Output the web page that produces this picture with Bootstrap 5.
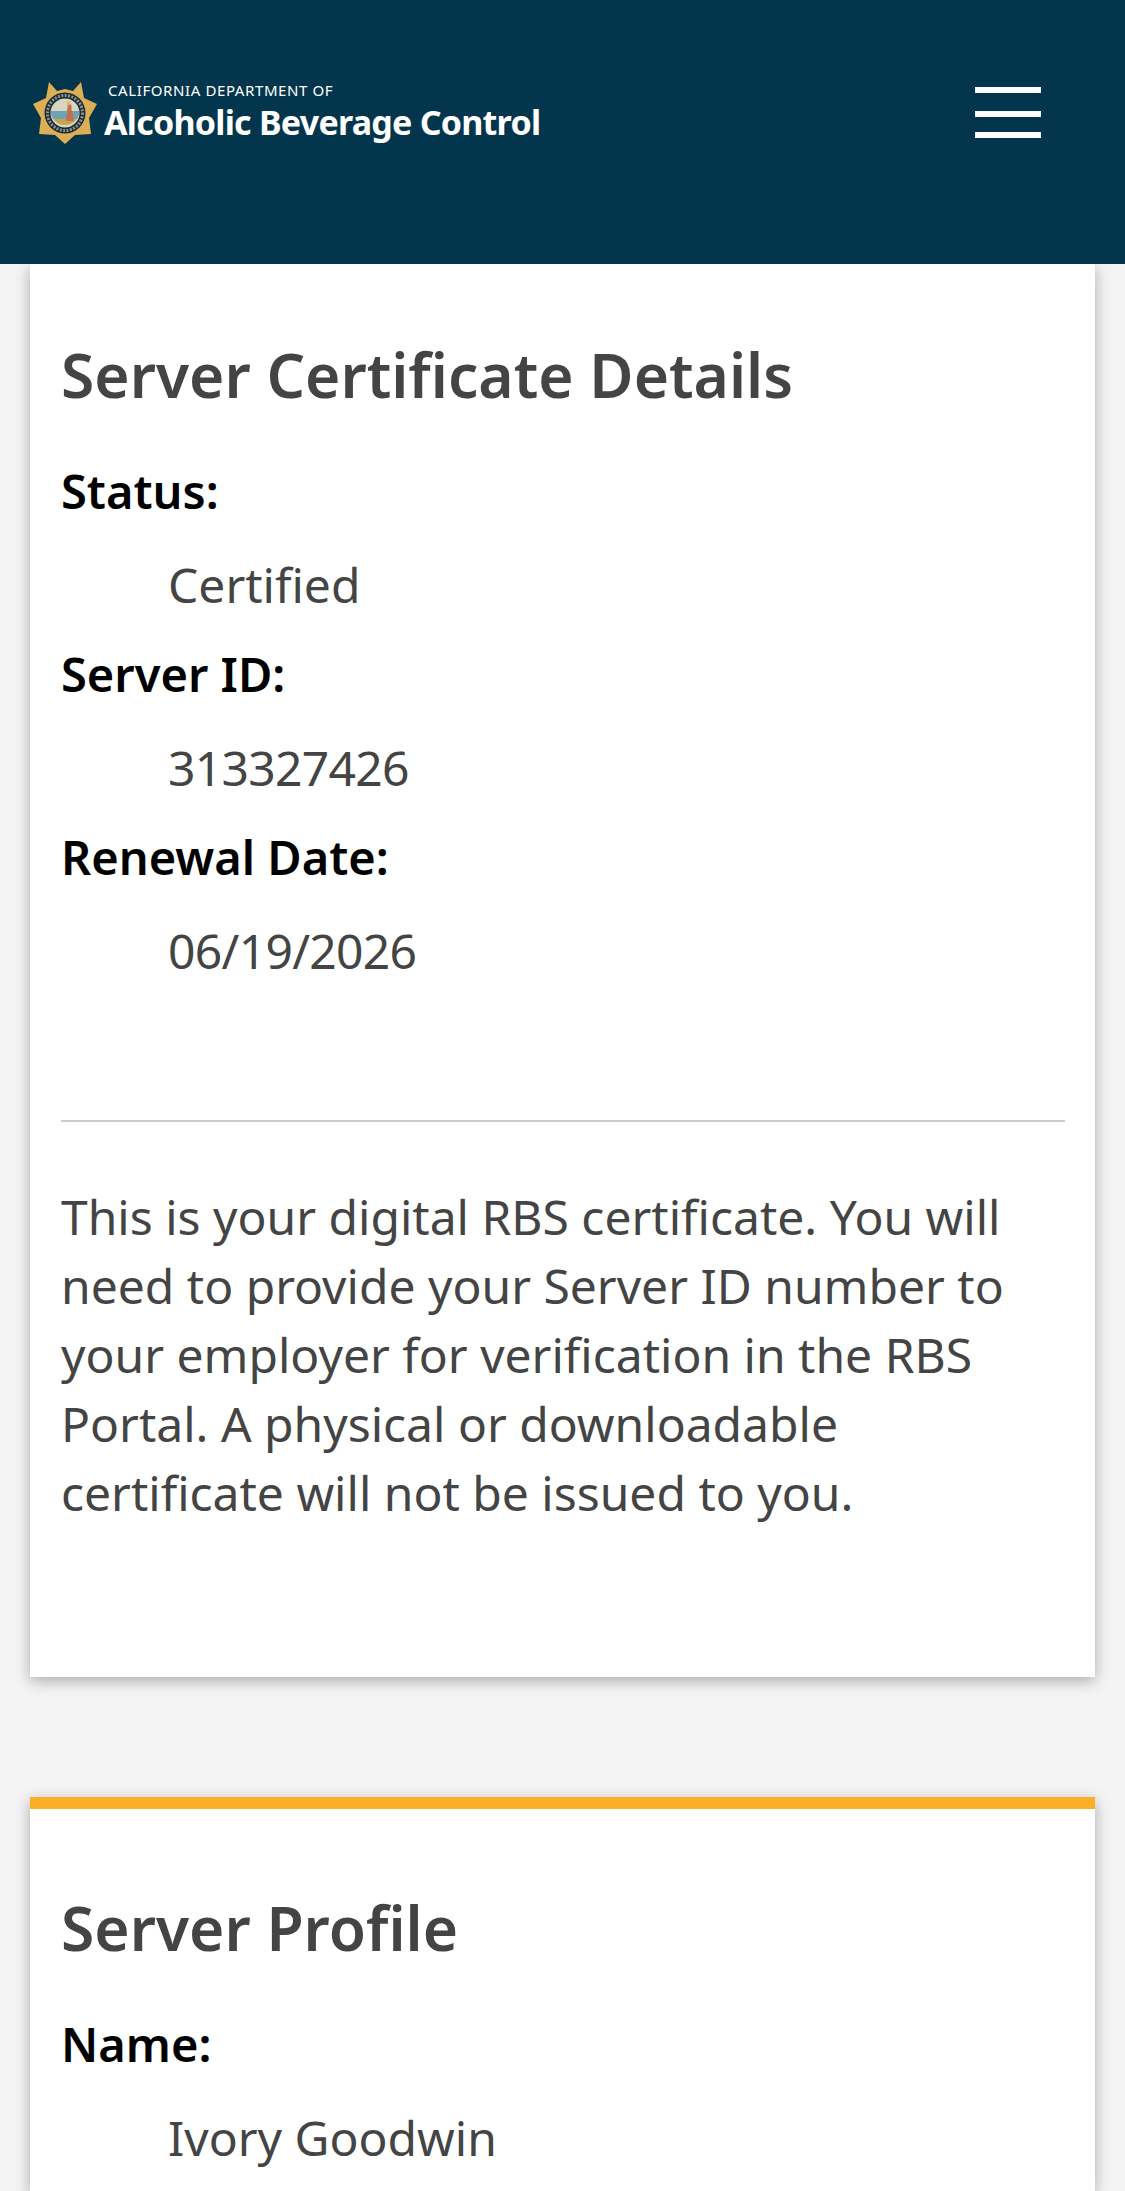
<!DOCTYPE html>
<html lang="en">
<head>
<meta charset="utf-8">
<title>Server Certificate Details</title>
<link href="https://cdn.jsdelivr.net/npm/bootstrap@5.3.0/dist/css/bootstrap.min.css" rel="stylesheet">
<style>
html,body{height:2191px;overflow:hidden}
body{background:#f4f4f4;font-family:"Noto Sans","Liberation Sans",sans-serif;color:#444;font-size:48px;line-height:69px;font-variant-ligatures:none}
.topbar{background:#03364d;height:264px;padding:82px 84px 0 33px;align-items:flex-start;position:relative;z-index:2}
.seal{width:64px;height:62px;flex:none}
.brandtxt{margin-left:7px;margin-top:-1px;color:#fff}
.brandtop{display:block;font-size:15px;line-height:18px;letter-spacing:.6px;margin-left:4px}
.brandmain{display:block;font-size:34px;line-height:46px;font-weight:700;letter-spacing:-.75px}
.burger{width:66px;padding-top:5px}
.burger span{display:block;height:6px;background:#fff}
.burger span+span{margin-top:18px}
.burger span:last-child{margin-top:15px}
.sheet{background:#fff;border:0;border-radius:0;margin:0 30px;padding:0 30px 0 31px;box-shadow:0 4px 14px rgba(0,0,0,.3)}
.sheet-first{padding-top:78px;height:1413px;margin-bottom:120px}
.sheet-second{border-top:12px solid #faaf26;padding-top:86px;height:394px}
.sheet h2{font-size:60.5px;line-height:66px;font-weight:600;color:#444;margin:0 0 49px}
.facts{margin:0}
.facts dt{font-size:47px;font-weight:600;color:#000;line-height:69px;margin:0 0 24px}
.facts dd{margin:0 0 21px 107px;line-height:69px}
.facts dd.numval{letter-spacing:-.7px}
.sheet hr{border:0;border-top:2px solid #ccc;opacity:1;margin:114px 0 60px}
.sheet p{margin:0}
</style>
</head>
<body>
<header class="navbar topbar d-flex justify-content-between flex-nowrap">
  <a class="d-flex text-decoration-none" href="#">
    <svg class="seal" viewBox="0 0 64 62" aria-hidden="true">
      <polygon points="16,0 24,9 32,7 40,9 48,0 51,16 64,22 56,36 58,52 42,53 32,62 22,53 6,52 8,36 0,22 13,16" fill="#dcae55"/>
      <circle cx="32" cy="31" r="20.5" fill="#1d2a32"/>
      <circle cx="32" cy="31" r="17.5" fill="none" stroke="#8d9496" stroke-width="3" stroke-dasharray="2 1.4"/>
      <circle cx="32" cy="31" r="14.5" fill="#d8d5c0"/>
      <path d="M17.8 29h28.4a14.5 14.5 0 0 1-2 8H20a14.5 14.5 0 0 1-2.2-8z" fill="#6ea3b3"/>
      <path d="M20.2 37h23.6a14.5 14.5 0 0 1-23.6 0z" fill="#c6a552"/>
      <path d="M35 21c3 0 4 3 3.500 6l2.500 12h-8l1-9z" fill="#c4704c"/>
      <circle cx="35.500" cy="21" r="2.200" fill="#e3bd78"/>
    </svg>
    <span class="brandtxt">
      <span class="brandtop">CALIFORNIA DEPARTMENT OF</span>
      <span class="brandmain">Alcoholic Beverage Control</span>
    </span>
  </a>
  <div class="burger" aria-label="Menu"><span></span><span></span><span></span></div>
</header>
<main>
  <section class="card sheet sheet-first">
    <h2>Server Certificate Details</h2>
    <dl class="facts">
      <dt>Status:</dt><dd>Certified</dd>
      <dt>Server ID:</dt><dd class="numval">313327426</dd>
      <dt>Renewal Date:</dt><dd class="numval">06/19/2026</dd>
    </dl>
    <hr>
    <p>This is your digital RBS certificate. You will need to provide your Server ID number to your employer for verification in the RBS Portal. A physical or downloadable certificate will not be issued to you.</p>
  </section>
  <section class="card sheet sheet-second">
    <h2>Server Profile</h2>
    <dl class="facts">
      <dt>Name:</dt><dd>Ivory Goodwin</dd>
    </dl>
  </section>
</main>
<script src="https://cdn.jsdelivr.net/npm/bootstrap@5.3.0/dist/js/bootstrap.bundle.min.js"></script>
</body>
</html>
